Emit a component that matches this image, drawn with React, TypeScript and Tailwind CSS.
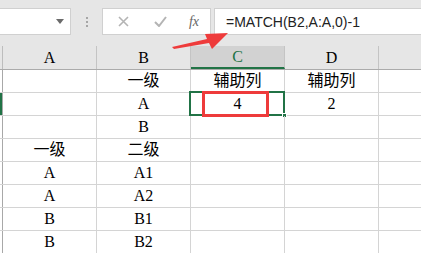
import React from "react";

const serif = "font-['Liberation_Serif','Noto_Sans_CJK_SC',serif]";

const rows: string[][] = [
    ["", "一级", "辅助列", "辅助列"],
    ["", "A", "4", "2"],
    ["", "B", "", ""],
    ["一级", "二级", "", ""],
    ["A", "A1", "", ""],
    ["A", "A2", "", ""],
    ["B", "B1", "", ""],
    ["B", "B2", "", ""],
];

const cols = ["A", "B", "C", "D"];

export default function App() {
    return (
        <div className="relative w-[421px] h-[253px] overflow-hidden bg-white text-black">
            {/* Formula bar */}
            <div className="h-[46px] bg-[#e6e6e6] flex items-start pt-[8px]">
                <div className="w-[72px] h-[27px] bg-white border border-[#d0d0d0] ml-[-1px] flex items-center justify-end pr-[6px]">
                    <svg width="8" height="5" viewBox="0 0 8 5">
                        <path d="M0 0 L8 0 L4 5 Z" fill="#6b6b6b" />
                    </svg>
                </div>
                <div className="w-[31px] h-[27px] flex flex-col items-center justify-center gap-[2px]">
                    <span className="w-[2px] h-[2px] bg-[#a6a6a6]" />
                    <span className="w-[2px] h-[2px] bg-[#a6a6a6]" />
                    <span className="w-[2px] h-[2px] bg-[#a6a6a6]" />
                </div>
                <div className="w-[109px] h-[27px] bg-white border border-[#d0d0d0] flex items-center">
                    <div className="w-[36px] flex justify-center ml-[2px]">
                        <svg width="11" height="11" viewBox="0 0 11 11">
                            <path d="M1 1 L10 10 M10 1 L1 10" stroke="#b4b4b4" strokeWidth="1.6" />
                        </svg>
                    </div>
                    <div className="w-[38px] flex justify-center">
                        <svg width="13" height="11" viewBox="0 0 13 11">
                            <path d="M1 6 L5 10 L12 1" stroke="#b4b4b4" strokeWidth="2" fill="none" />
                        </svg>
                    </div>
                    <div className="w-[30px] flex justify-center">
                        <span className="font-['Liberation_Serif',serif] italic text-[14px] leading-none text-[#666666]">fx</span>
                    </div>
                </div>
                <div className="flex-1 ml-[3px] h-[27px] bg-white border border-[#d0d0d0] border-r-0 flex items-center pl-[11px]">
                    <span className="font-['Liberation_Sans',sans-serif] text-[14px] leading-none text-[#222222]">
                        =MATCH(B2,A:A,0)-1
                    </span>
                </div>
            </div>

            {/* Column headers */}
            <div className="flex h-[24px] bg-[#e6e6e6] border-b border-[#ababab]">
                <div className="w-[3px] border-r border-[#bdbdbd]" />
                {cols.map((c) => (
                    <div
                        key={c}
                        className={
                            "w-[94px] border-r border-[#c4c4c4] flex items-center justify-center text-[16px] " +
                            serif +
                            (c === "C" ? " bg-[#d2d2d2] text-[#217346] border-b-2 border-b-[#217346]" : "")
                        }
                    >
                        {c}
                    </div>
                ))}
                <div className="flex-1" />
            </div>

            {/* Grid */}
            {rows.map((r, i) => (
                <div key={i} className="flex h-[23px] border-b border-[#d4d4d4]">
                    <div className={"w-[3px] border-r border-[#a8a8a8] " + (i === 1 ? "bg-[#217346]" : "bg-white")} />
                    {r.map((v, j) => (
                        <div
                            key={j}
                            className={"relative w-[94px] border-r border-[#d4d4d4] flex items-center justify-center text-[16px] leading-none " + serif}
                        >
                            {v}
                            {i === 1 && j === 2 && (
                                <>
                                    <div className="absolute left-[-2px] top-[-2px] w-[96px] h-[25px] border-2 border-[#217346]" />
                                    <div className="absolute right-[-3px] bottom-[-3px] w-[5px] h-[5px] bg-[#217346] border border-white" />
                                </>
                            )}
                        </div>
                    ))}
                    <div className="flex-1" />
                </div>
            ))}

            {/* Annotation */}
            <div className="absolute left-[202px] top-[91px] w-[67px] h-[26px] border-[3px] border-[#ee3b3b]" />
            <svg className="absolute left-0 top-0" width="421" height="253" viewBox="0 0 421 253">
                <polygon points="172,47 207,39 205,34 228,33 212,49 209,43 174,49" fill="#ee3b3b" />
            </svg>
        </div>
    );
}
